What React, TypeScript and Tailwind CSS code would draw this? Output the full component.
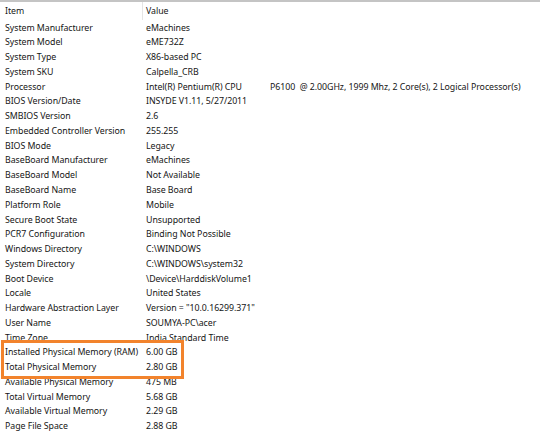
const rows: [string, string][] = [
  ['System Manufacturer', 'eMachines'],
  ['System Model', 'eME732Z'],
  ['System Type', 'X86-based PC'],
  ['System SKU', 'Calpella_CRB'],
  ['Processor', 'Intel(R) Pentium(R) CPU'],
  ['BIOS Version/Date', 'INSYDE V1.11, 5/27/2011'],
  ['SMBIOS Version', '2.6'],
  ['Embedded Controller Version', '255.255'],
  ['BIOS Mode', 'Legacy'],
  ['BaseBoard Manufacturer', 'eMachines'],
  ['BaseBoard Model', 'Not Available'],
  ['BaseBoard Name', 'Base Board'],
  ['Platform Role', 'Mobile'],
  ['Secure Boot State', 'Unsupported'],
  ['PCR7 Configuration', 'Binding Not Possible'],
  ['Windows Directory', 'C:\\WINDOWS'],
  ['System Directory', 'C:\\WINDOWS\\system32'],
  ['Boot Device', '\\Device\\HarddiskVolume1'],
  ['Locale', 'United States'],
  ['Hardware Abstraction Layer', 'Version = "10.0.16299.371"'],
  ['User Name', 'SOUMYA-PC\\acer'],
  ['Time Zone', 'India Standard Time'],
];

const highlighted: [string, string][] = [
  ['Installed Physical Memory (RAM)', '6.00 GB'],
  ['Total Physical Memory', '2.80 GB'],
];

const rest: [string, string][] = [
  ['Available Physical Memory', '475 MB'],
  ['Total Virtual Memory', '5.68 GB'],
  ['Available Virtual Memory', '2.29 GB'],
  ['Page File Space', '2.88 GB'],
];

function Row({ item, value }: { item: string; value: string }) {
  return (
    <div className="flex h-[14.78px] items-center leading-none">
      <div className="w-[142px] shrink-0 whitespace-nowrap pl-[5px]">{item}</div>
      <div className="flex whitespace-nowrap pl-[4px]">
        {item === 'Processor' ? (
          <>
            <span className="w-[124px] shrink-0">{value}</span>
            <span className="whitespace-pre">P6100  @ 2.00GHz, 1999 Mhz, 2 Core(s), 2 Logical Processor(s)</span>
          </>
        ) : (
          value
        )}
      </div>
    </div>
  );
}

export default function App() {
  return (
    <div
      className="h-[437px] w-[540px] overflow-hidden bg-white text-[8.8px] tracking-[-0.05px] text-[#151515]"
      style={{ fontFamily: '"Noto Sans", "Open Sans", sans-serif' }}
    >
      <div className="h-[2px] bg-[#c4c4c4]" />
      <div className="flex h-[18.6px] items-center leading-none">
        <div className="w-[142px] shrink-0 pl-[5px]">Item</div>
        <div className="h-[18px] w-px bg-[#e5e5e5]" />
        <div className="pl-[3px]">Value</div>
      </div>
      {rows.map(([a, b]) => (
        <Row key={a} item={a} value={b} />
      ))}
      <div className="relative">
        {highlighted.map(([a, b]) => (
          <Row key={a} item={a} value={b} />
        ))}
        <div className="absolute -top-[5px] -bottom-[4px] left-[1px] w-[183px] border-[3px] border-[#f2832c]" />
      </div>
      {rest.map(([a, b]) => (
        <Row key={a} item={a} value={b} />
      ))}
    </div>
  );
}
